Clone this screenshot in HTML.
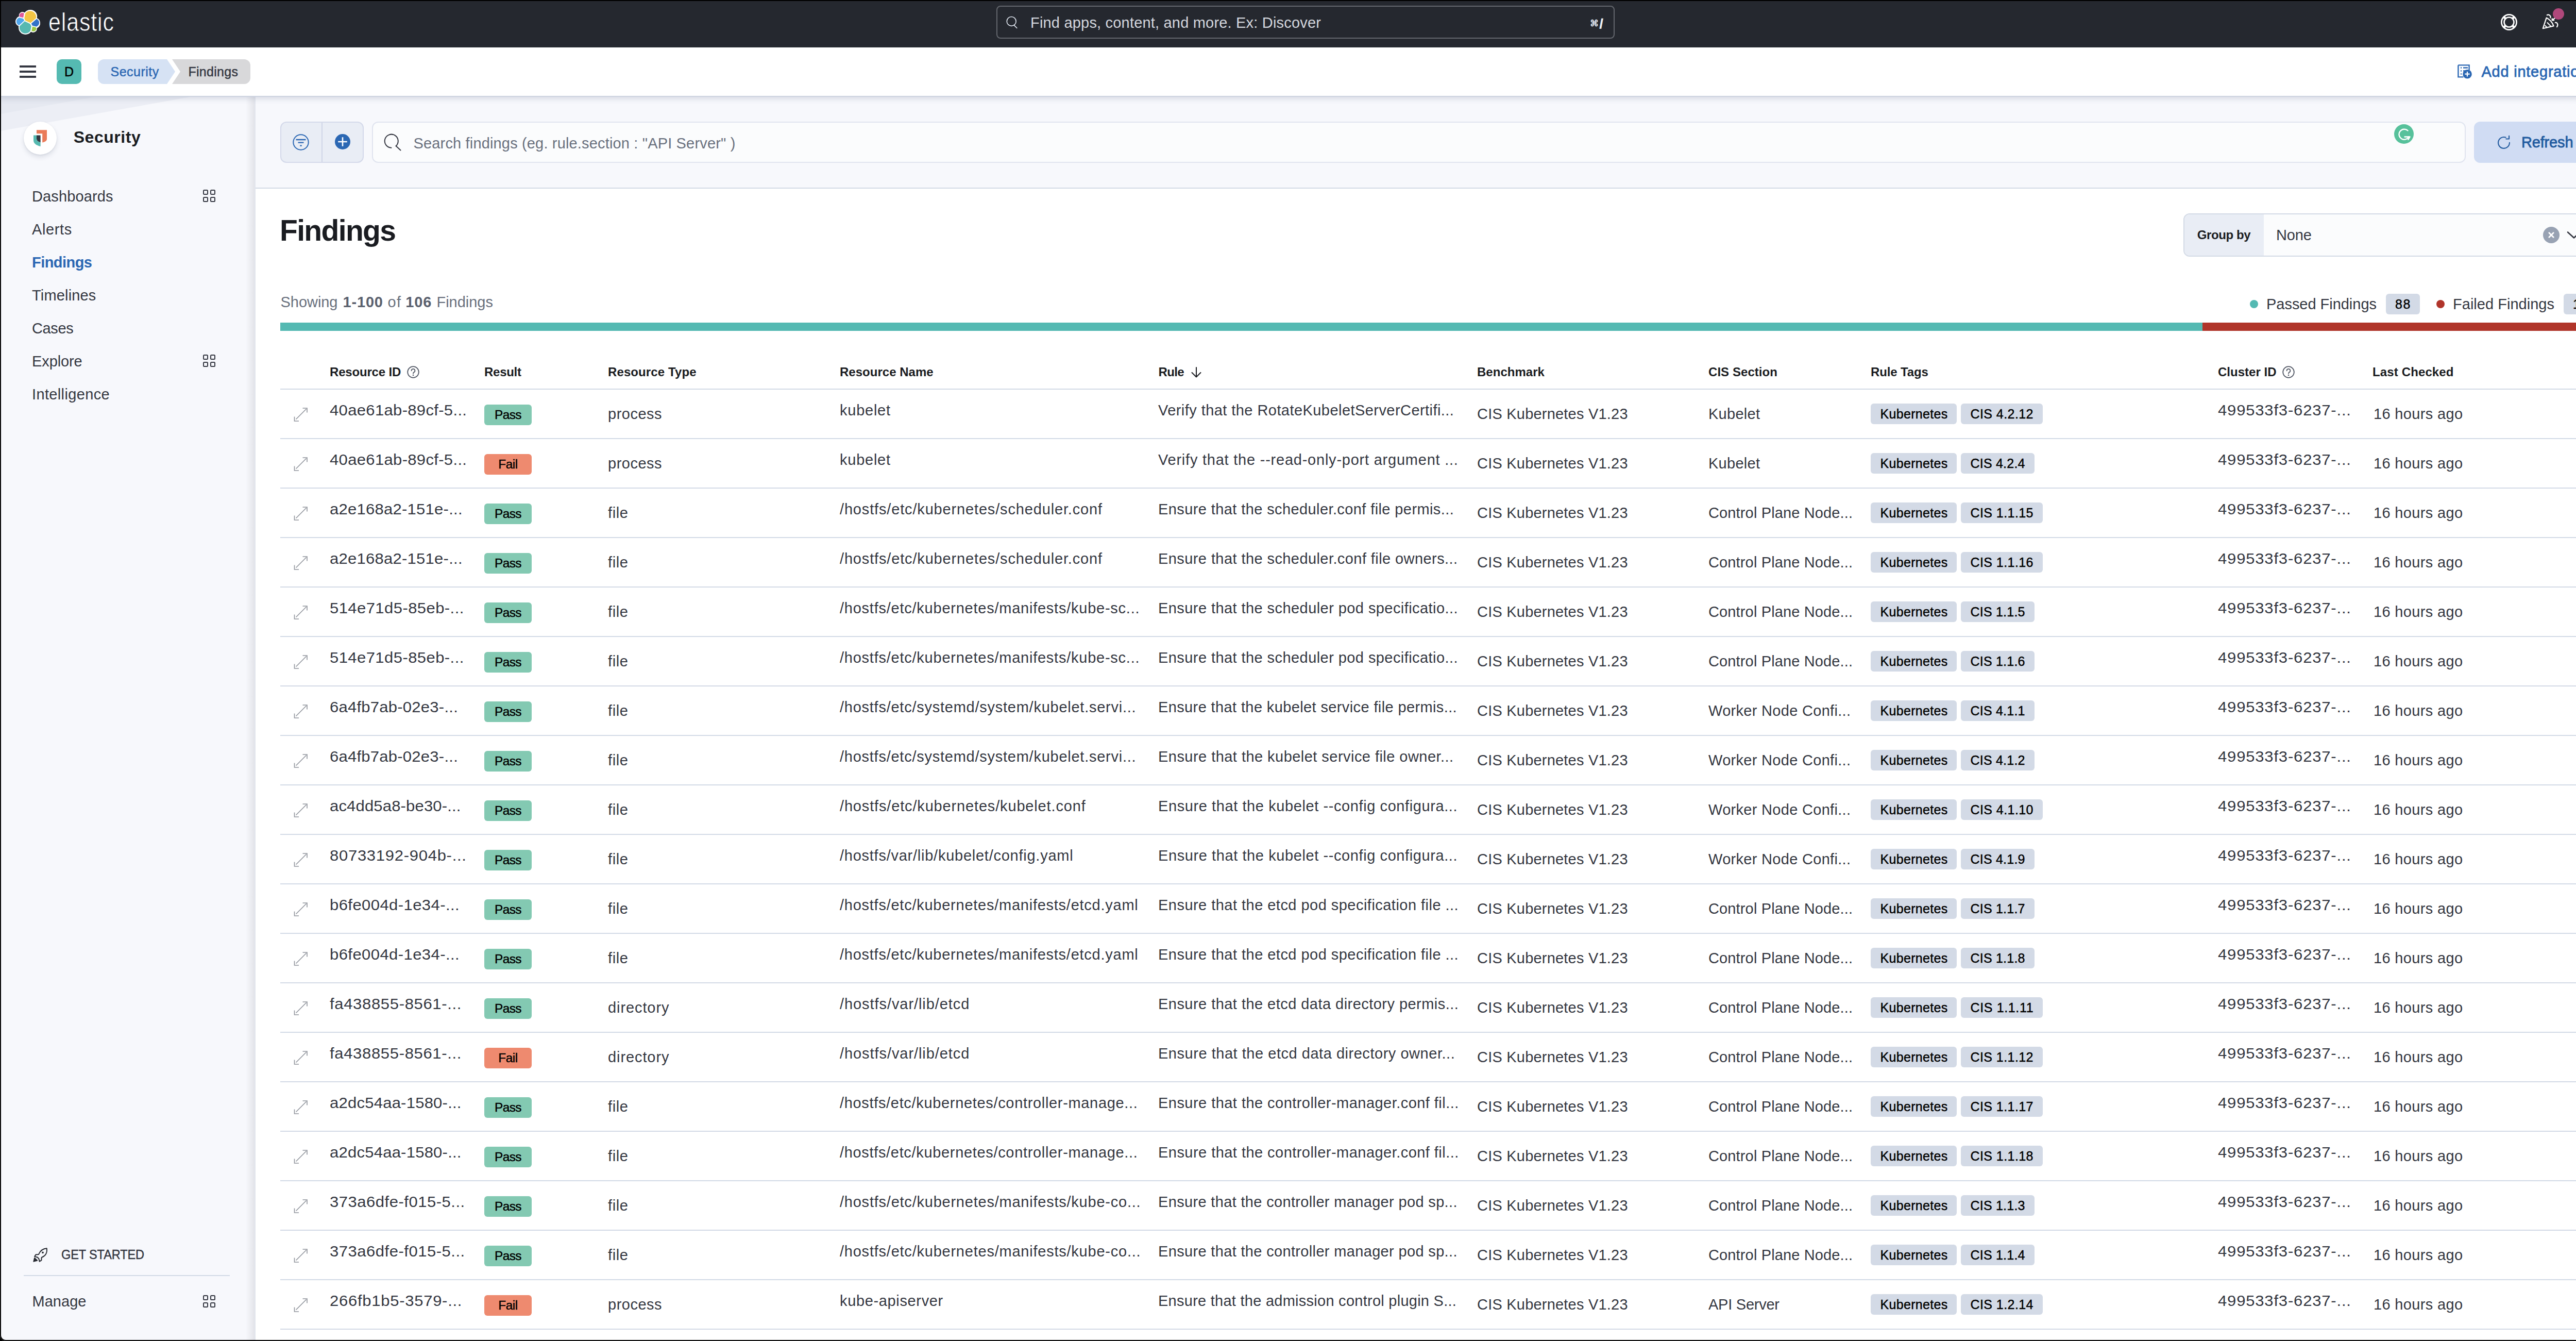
<!DOCTYPE html>
<html lang="en"><head><meta charset="utf-8"><title>Findings - Security - Elastic</title>
<style>
html,body{margin:0;padding:0}
body{width:5088px;height:2602px;overflow:hidden;background:#fff;position:relative;font-family:"Liberation Sans",sans-serif;color:#343741}
body>*{position:absolute}
.t{white-space:pre}
.med{-webkit-text-stroke:.45px currentColor}
.semi{-webkit-text-stroke:.8px currentColor}
.elastic{-webkit-text-stroke:.7px #25282f}
svg{overflow:visible}
#h1{left:0;top:0;width:5088px;height:92px;background:#25282f}
#gsearch{left:1934px;top:11px;width:1200px;height:64px;box-sizing:border-box;border:2px solid #63666d;border-radius:8px;background:#25282f}
#dot{left:4955px;top:16px;width:22px;height:22px;border-radius:50%;background:#b0487b}
#avatar{left:5006px;top:19px;width:48px;height:48px;border-radius:50%;background:#b9ab8d}
#h2{left:0;top:92px;width:5088px;height:94px;background:#fff;border-bottom:2px solid #cdd3e0;box-shadow:0 4px 10px rgba(80,90,120,.18);z-index:5}
.ham,#space,#bc1,#bc2{z-index:6}
.t,.ic{z-index:7}
.ham{left:38px;width:32px;height:4px;background:#343741}
#space{left:110px;top:115px;width:48px;height:48px;border-radius:10px;background:#55bab2}
#bc1{left:190px;top:115px;width:150px;height:48px;background:#d6e2f4;border-radius:12px 0 0 12px;clip-path:polygon(0 0,134px 0,100% 50%,134px 100%,0 100%)}
#bc2{left:334px;top:115px;width:152px;height:48px;background:#d8d8da;border-radius:0 12px 12px 0;clip-path:polygon(0 0,100% 0,100% 100%,0 100%,16px 50%)}
#side{left:0;top:186px;width:494px;height:2416px;background:#f7f8fc}
#sideshadow{left:477px;top:188px;width:17px;height:2414px;background:linear-gradient(90deg,rgba(105,105,120,0),rgba(105,105,120,.14))}
#sideborder{left:494px;top:188px;width:2px;height:2414px;background:#e2e5ed}
#seccircle{left:46px;top:236px;width:64px;height:64px;border-radius:50%;background:#fff;box-shadow:0 5px 10px rgba(60,70,100,.14),0 1px 3px rgba(60,70,100,.1)}
#sidehr{left:46px;top:2474px;width:400px;height:2px;background:#d3dae6}
#toolbar{left:496px;top:186px;width:4592px;height:178px;background:#f7f8fc;border-bottom:2px solid #d3dae6}
#fgroup{left:544px;top:236px;width:162px;height:80px;box-sizing:border-box;border:2px solid #d4d9ea;border-radius:12px;background:#e9edf5}
#fgroup i{position:absolute;left:78px;top:0;width:2px;height:76px;background:#d0d5e7}
#qinput{left:722px;top:236px;width:4064px;height:80px;box-sizing:border-box;border:2px solid #e0e4ef;border-radius:12px;background:#fbfcfd}
#refresh{left:4802px;top:236px;width:236px;height:80px;border-radius:12px;background:#d0dcf3}
#groupby{left:4238px;top:414px;width:800px;height:84px;box-sizing:border-box;border:2px solid #d3dae6;border-radius:12px;background:#fbfcfd;overflow:hidden}
#groupby i{position:absolute;left:0;top:0;width:154px;height:80px;background:#e9edf5}
.ldot{top:582px;width:16px;height:16px;border-radius:50%}
.cnt{top:570px;height:40px;border-radius:6px;background:#d3dae6}
#bar{left:544px;top:626px;width:4494px;height:16px;background:#b0352a}
#bar i{position:absolute;left:0;top:0;width:3731px;height:16px;background:#54b9b2}
.hl{left:544px;width:4494px;height:2px;background:#d3dae6}
.res{left:940px;width:92px;height:40px;border-radius:6px}
.pass{background:#83c9b2}.fail{background:#ee8a6f}
.tag{height:40px;border-radius:6px;background:#d3dae6}
#frame{left:0;top:0;width:5088px;height:2602px;box-sizing:border-box;border:2px solid #000;border-bottom-left-radius:11px;box-shadow:0 0 0 30px #000;z-index:50;pointer-events:none}
</style></head>
<body>
<div id="h1"></div>
<svg id="logo" viewBox="0 0 32 32" style="left:30px;top:19px;width:48px;height:48px">
<path fill="#fff" d="M32 16.77a6.334 6.334 0 0 0-1.14-3.63 6.269 6.269 0 0 0-3.03-2.29 9.021 9.021 0 0 0-1.6-7.63A8.932 8.932 0 0 0 19.19 0a8.883 8.883 0 0 0-7.22 3.7 4.757 4.757 0 0 0-5.37-.26 4.8 4.8 0 0 0-2.03 5.01A6.39 6.39 0 0 0 1.16 11.55 6.42 6.42 0 0 0 0 15.23a6.36 6.36 0 0 0 1.15 3.65 6.29 6.29 0 0 0 3.04 2.29 9.04 9.04 0 0 0-.2 1.83 8.95 8.95 0 0 0 6.19 8.56 8.87 8.87 0 0 0 9.99-3.28 4.74 4.74 0 0 0 2.91 1.02 4.76 4.76 0 0 0 3.37-1.4 4.8 4.8 0 0 0 1.4-3.39c0-.3-.03-.6-.09-.89a6.4 6.4 0 0 0 3.07-2.32A6.43 6.43 0 0 0 32 16.77"/>
<path fill="#f4c545" d="M12.58 13.787l7.002 3.211 7.066-6.213a7.849 7.849 0 0 0 .152-1.557c0-4.287-3.472-7.775-7.74-7.775a7.723 7.723 0 0 0-6.38 3.37l-1.176 6.124 1.076 2.84z"/>
<path fill="#56b9b1" d="M5.348 21.205a7.9 7.9 0 0 0-.153 1.583c0 4.299 3.482 7.796 7.762 7.796a7.738 7.738 0 0 0 6.398-3.396l1.166-6.104-1.557-2.989-7.03-3.217-6.586 6.327z"/>
<path fill="#e0589b" d="M5.305 9.034l4.8 1.138 1.05-5.48a3.794 3.794 0 0 0-2.31-.786c-2.085 0-3.782 1.704-3.782 3.799 0 .463.082.91.242 1.329"/>
<path fill="#4fa6ec" d="M4.888 10.182C2.744 10.893 1.25 12.958 1.25 15.227c0 2.21 1.36 4.182 3.404 4.962l6.733-6.113-1.236-2.653-5.263-1.241z"/>
<path fill="#9bc73f" d="M20.887 27.188a3.754 3.754 0 0 0 2.299.789c2.085 0 3.782-1.704 3.782-3.799 0-.462-.082-.91-.241-1.329l-4.796-1.127-1.044 5.466z"/>
<path fill="#3372c7" d="M21.862 20.543l5.28 1.24c2.145-.712 3.64-2.778 3.64-5.048 0-2.206-1.364-4.176-3.411-4.954l-6.906 6.077 1.397 2.685z"/>
</svg>
<span class="t elastic" style="left:94.0px;top:6.2px;font-size:50px;line-height:75px;color:#fff;letter-spacing:0.99px;transform:scaleX(0.86);transform-origin:0 50%;">elastic</span>
<div id="gsearch"></div>
<svg class="ic" viewBox="0 0 32 32" style="left:1951px;top:30px;width:26px;height:26px" fill="none" stroke="#dfe5ef" stroke-width="2"><circle cx="15" cy="14" r="11"/><path d="M21.5 23.5L28 30" stroke-linecap="round"/></svg>
<span class="t" style="left:2000.0px;top:21.5px;font-size:29px;line-height:44px;color:#d4d7de;letter-spacing:0.19px;">Find apps, content, and more. Ex: Discover</span>
<span class="t kbd" style="left:3085.5px;top:33.3px;font-size:17px;line-height:26px;font-weight:700;color:#dfe5ef;font-family:"DejaVu Sans","Liberation Sans",sans-serif;">⌘</span>
<span class="t kbd" style="left:3104.5px;top:26.5px;font-size:26px;line-height:39px;font-weight:700;color:#eef1f6;-webkit-text-stroke:.5px #eef1f6;">/</span>
<svg class="ic" viewBox="0 0 32 32" style="left:4854px;top:27px;width:32px;height:32px" fill="none" stroke="#fff" stroke-width="2.700"><circle cx="16" cy="16" r="14.600"/><circle cx="16" cy="16" r="9.500"/><path d="M6.200 6.200l2.500 2.500M25.800 6.200l-2.500 2.500M6.200 25.800l2.500-2.500M25.800 25.800l-2.500-2.500" stroke-width="4.600"/></svg>
<svg class="ic" viewBox="0 0 32 32" style="left:4934px;top:27px;width:32px;height:32px" fill="none" stroke="#fff" stroke-width="2.200" stroke-linecap="round" stroke-linejoin="round"><path d="M8.600 7.600L1.800 28.200 22.600 23.400Q18.500 12.500 8.600 7.600z"/><path d="M10.400 17l6.500 6.600M6.200 22.700l3.200 3.300" stroke-width="2"/><path d="M9.800 2.200c3.400-1.600 7.600.800 6.600 5.200M25.800 16.800c3.600-.600 6.400 3.400 3.200 8.400M24.400 8.700l-4.700 3.600M19.700 9v3.300h3.500"/></svg>
<div id="dot"></div>
<div id="avatar"></div>
<span class="t" style="left:5026.6px;top:23.4px;font-size:24.4px;line-height:37px;color:#000;-webkit-text-stroke:.7px #000;">t</span>
<div id="h2"></div>
<div class="ham" style="top:127px"></div><div class="ham" style="top:137px"></div><div class="ham" style="top:147px"></div>
<div id="space"></div>
<span class="t" style="left:125.0px;top:120.3px;font-size:25px;line-height:38px;color:#000;-webkit-text-stroke:.5px #000;">D</span>
<div id="bc1"></div><div id="bc2"></div>
<span class="t med" style="left:214.6px;top:119.8px;font-size:25px;line-height:38px;color:#2b67b3;letter-spacing:0.47px;">Security</span>
<span class="t med" style="left:365.5px;top:119.8px;font-size:25px;line-height:38px;letter-spacing:0.27px;">Findings</span>
<svg class="ic" viewBox="0 0 32 32" style="left:4768px;top:123px;width:32px;height:32px" fill="none" stroke="#2b67b3" stroke-width="2.4"><path d="M3.400 3.400h21.200v10M3.400 3.400v23h10"/><path d="M8 8.500h2M8 14.500h2M8 20.500h2M13 8.500h9M13 14.500h6M13 20.500h3" stroke-width="2.600"/><circle cx="21" cy="20.700" r="8.800" fill="#2b67b3" stroke="none"/><path d="M21 16v9.400M16.300 20.700h9.400" stroke="#fff" stroke-width="2.200"/></svg>
<span class="t semi" style="left:4816.5px;top:116.5px;font-size:29px;line-height:44px;color:#2b67b3;letter-spacing:0.76px;">Add integrations</span>
<div id="side"></div>
<svg id="sidedeco" viewBox="0 0 492 120" style="left:2px;top:188px;width:492px;height:120px"><path d="M0 0h367L0 66z" fill="#eceef5"/><path d="M0 0h182L0 33z" fill="#e6e9f1"/></svg>
<div id="sideshadow"></div><div id="sideborder"></div>
<div id="seccircle"></div>
<svg class="ic" viewBox="0 0 32 32" style="left:62px;top:251.600px;width:32px;height:32px"><path fill="#ea7b59" d="M9 .3h20v17.500c0 3.400-3.500 5.800-8.800 6.800V7.300H9z"/><path fill="#343741" d="M9 10.600h7.600v13.600C12 23.200 9 20.700 9 17.200z"/><path fill="#56b9b0" d="M3 10.600h6v6.600c0 3.500 3 6 7.600 7v7.900C8 30 3 26 3 20.300z"/></svg>
<span class="t" style="left:142.7px;top:241.9px;font-size:32px;line-height:48px;font-weight:700;color:#1a1c21;letter-spacing:0.53px;">Security</span>
<span class="t" style="left:62.0px;top:358.5px;font-size:29px;line-height:44px;letter-spacing:0.12px;">Dashboards</span>
<svg class="ic" viewBox="0 0 24 24" style="left:394px;top:368px;width:24px;height:24px" fill="none" stroke="#343741" stroke-width="2"><rect x="1" y="1" width="8" height="8" rx="1.500"/><rect x="15" y="1" width="8" height="8" rx="1.500"/><rect x="1" y="15" width="8" height="8" rx="1.500"/><rect x="15" y="15" width="8" height="8" rx="1.500"/></svg>
<span class="t" style="left:62.0px;top:422.5px;font-size:29px;line-height:44px;letter-spacing:0.63px;">Alerts</span>
<span class="t" style="left:62.0px;top:486.5px;font-size:29px;line-height:44px;font-weight:700;color:#2b67b3;letter-spacing:-0.55px;">Findings</span>
<span class="t" style="left:62.0px;top:550.5px;font-size:29px;line-height:44px;letter-spacing:0.17px;">Timelines</span>
<span class="t" style="left:62.0px;top:614.5px;font-size:29px;line-height:44px;letter-spacing:-0.38px;">Cases</span>
<span class="t" style="left:62.0px;top:678.5px;font-size:29px;line-height:44px;letter-spacing:-0.10px;">Explore</span>
<svg class="ic" viewBox="0 0 24 24" style="left:394px;top:688px;width:24px;height:24px" fill="none" stroke="#343741" stroke-width="2"><rect x="1" y="1" width="8" height="8" rx="1.500"/><rect x="15" y="1" width="8" height="8" rx="1.500"/><rect x="1" y="15" width="8" height="8" rx="1.500"/><rect x="15" y="15" width="8" height="8" rx="1.500"/></svg>
<span class="t" style="left:62.0px;top:742.5px;font-size:29px;line-height:44px;letter-spacing:0.36px;">Intelligence</span>
<svg class="ic" viewBox="0 0 32 32" style="left:63.500px;top:2419.500px;width:29px;height:29px" fill="none" stroke="#25282f" stroke-width="2.200" stroke-linejoin="round"><path d="M29.500 2.500c-9 .5-14 5-17.500 13l-6 .5-2.500 4 6 1.500 3 3 1.500 6 4-2.500.5-6c8-3.500 12.500-8.500 11-19.500z"/><circle cx="21" cy="11.500" r="2" fill="#25282f" stroke="none"/><path d="M1.500 30.500l2-7.500 5.500 5.500z" fill="#25282f"/></svg>
<span class="t med" style="left:119.0px;top:2414.6px;font-size:25px;line-height:38px;letter-spacing:-0.10px;transform:scaleX(0.94);transform-origin:0 50%;">GET STARTED</span>
<div id="sidehr"></div>
<span class="t" style="left:62.5px;top:2503.0px;font-size:29px;line-height:44px;letter-spacing:0.04px;">Manage</span>
<svg class="ic" viewBox="0 0 24 24" style="left:394px;top:2513px;width:24px;height:24px" fill="none" stroke="#343741" stroke-width="2"><rect x="1" y="1" width="8" height="8" rx="1.500"/><rect x="15" y="1" width="8" height="8" rx="1.500"/><rect x="1" y="15" width="8" height="8" rx="1.500"/><rect x="15" y="15" width="8" height="8" rx="1.500"/></svg>
<div id="toolbar"></div>
<div id="fgroup"><i></i></div>
<svg class="ic" viewBox="0 0 32 32" style="left:568px;top:260px;width:32px;height:32px" fill="none" stroke="#2b67b3" stroke-width="2"><circle cx="16" cy="16" r="14.700"/><path d="M6.500 11h19M10.500 16.600h11M14.300 22.600h3.500" stroke-width="2.400"/></svg>
<svg class="ic" viewBox="0 0 32 32" style="left:649px;top:259px;width:32px;height:32px"><circle cx="16" cy="16" r="15" fill="#2b67b3"/><path d="M16 7.200v17.600M7.200 16h17.600" stroke="#fff" stroke-width="2.600"/></svg>
<div id="qinput"></div>
<svg class="ic" viewBox="0 0 36 36" style="left:744px;top:258px;width:36px;height:36px" fill="none" stroke="#343741" stroke-width="2" stroke-linecap="round"><path d="M15.500 28.700A13 13 0 1 1 24.600 25.200"/><path d="M24.600 25.200L33.500 33.500"/></svg>
<span class="t" style="left:802.5px;top:255.5px;font-size:29px;line-height:44px;color:#69707d;letter-spacing:0.16px;">Search findings (eg. rule.section : &quot;API Server&quot; )</span>
<svg class="ic" viewBox="0 0 38 38" style="left:4647px;top:241px;width:38px;height:38px"><circle cx="19" cy="19" r="19" fill="#57c19b"/><path d="M26.500 12.500a10 10 0 1 0 1.800 12" fill="none" stroke="#fff" stroke-width="2.400" stroke-linecap="round"/><path d="M20.500 24.500h10l-3.200 5.200" fill="none" stroke="#fff" stroke-width="2.400" stroke-linejoin="round" stroke-linecap="round"/></svg>
<div id="refresh"></div>
<svg class="ic" viewBox="0 0 32 32" style="left:4846px;top:262px;width:28px;height:28px" fill="none" stroke="#225b9f" stroke-width="2.400" stroke-linecap="round" stroke-linejoin="round"><path d="M28.500 17A12.500 12.500 0 1 1 20 5.200"/><path d="M27.500 2v6.500H21"/></svg>
<span class="t semi" style="left:4894.0px;top:254.0px;font-size:29px;line-height:44px;color:#225b9f;letter-spacing:-0.17px;">Refresh</span>
<span class="t" style="left:543.0px;top:403.7px;font-size:57px;line-height:86px;font-weight:700;color:#1a1c21;letter-spacing:-1.64px;">Findings</span>
<div id="groupby"><i></i></div>
<span class="t" style="left:4264.7px;top:437.7px;font-size:24px;line-height:36px;font-weight:700;color:#1a1c21;letter-spacing:-0.38px;">Group by</span>
<span class="t" style="left:4418.0px;top:433.5px;font-size:29px;line-height:44px;letter-spacing:-0.11px;">None</span>
<svg class="ic" viewBox="0 0 32 32" style="left:4936px;top:439.600px;width:32px;height:32px"><circle cx="16" cy="16" r="16" fill="#98a2b3"/><path d="M11.800 11.800l8.400 8.400M20.200 11.800l-8.400 8.400" stroke="#fff" stroke-width="2.800" stroke-linecap="round"/></svg>
<svg class="ic" viewBox="0 0 32 32" style="left:4980px;top:440px;width:32px;height:32px" fill="none" stroke="#343741" stroke-width="2.600" stroke-linecap="round" stroke-linejoin="round"><path d="M4 10.500l12 11 12-11"/></svg>
<span class="t" style="left:544.5px;top:564.0px;font-size:29px;line-height:44px;color:#69707d;letter-spacing:-0.04px;">Showing</span>
<span class="t" style="left:665.5px;top:564.0px;font-size:29px;line-height:44px;font-weight:700;color:#5a606d;letter-spacing:0.83px;">1-100</span>
<span class="t" style="left:752.5px;top:564.0px;font-size:29px;line-height:44px;color:#69707d;letter-spacing:1.31px;">of</span>
<span class="t" style="left:787.3px;top:564.0px;font-size:29px;line-height:44px;font-weight:700;color:#5a606d;letter-spacing:0.80px;">106</span>
<span class="t" style="left:847.5px;top:564.0px;font-size:29px;line-height:44px;color:#69707d;letter-spacing:-0.02px;">Findings</span>
<div class="ldot" style="left:4367px;background:#54b9b2"></div>
<span class="t" style="left:4399.0px;top:568.0px;font-size:29px;line-height:44px;letter-spacing:-0.03px;">Passed Findings</span>
<div class="cnt" style="left:4631px;width:66px"></div>
<span class="t med" style="left:4649.0px;top:570.8px;font-size:25px;line-height:38px;color:#000;letter-spacing:1.69px;">88</span>
<div class="ldot" style="left:4729px;background:#b0352a"></div>
<span class="t" style="left:4761.0px;top:568.0px;font-size:29px;line-height:44px;letter-spacing:0.02px;">Failed Findings</span>
<div class="cnt" style="left:4976px;width:62px"></div>
<span class="t med" style="left:4994.0px;top:570.8px;font-size:25px;line-height:38px;color:#000;letter-spacing:-1.81px;">18</span>
<div id="bar"><i></i></div>
<span class="t" style="left:640.0px;top:704.2px;font-size:24px;line-height:36px;font-weight:700;color:#1a1c21;letter-spacing:-0.18px;">Resource ID</span>
<span class="t" style="left:940.0px;top:704.2px;font-size:24px;line-height:36px;font-weight:700;color:#1a1c21;letter-spacing:-0.27px;">Result</span>
<span class="t" style="left:1180.0px;top:704.2px;font-size:24px;line-height:36px;font-weight:700;color:#1a1c21;letter-spacing:0.10px;">Resource Type</span>
<span class="t" style="left:1630.0px;top:704.2px;font-size:24px;line-height:36px;font-weight:700;color:#1a1c21;letter-spacing:0.02px;">Resource Name</span>
<span class="t" style="left:2248.5px;top:704.2px;font-size:24px;line-height:36px;font-weight:700;color:#1a1c21;letter-spacing:-0.67px;">Rule</span>
<span class="t" style="left:2867.0px;top:704.2px;font-size:24px;line-height:36px;font-weight:700;color:#1a1c21;letter-spacing:0.03px;">Benchmark</span>
<span class="t" style="left:3316.0px;top:704.2px;font-size:24px;line-height:36px;font-weight:700;color:#1a1c21;letter-spacing:0.06px;">CIS Section</span>
<span class="t" style="left:3631.0px;top:704.2px;font-size:24px;line-height:36px;font-weight:700;color:#1a1c21;letter-spacing:-0.12px;">Rule Tags</span>
<span class="t" style="left:4305.0px;top:704.2px;font-size:24px;line-height:36px;font-weight:700;color:#1a1c21;letter-spacing:0.02px;">Cluster ID</span>
<span class="t" style="left:4605.0px;top:704.2px;font-size:24px;line-height:36px;font-weight:700;color:#1a1c21;letter-spacing:0.13px;">Last Checked</span>
<svg class="ic" viewBox="0 0 24 24" style="left:790px;top:710px;width:24px;height:24px" fill="none" stroke="#535966" stroke-width="1.800"><circle cx="12" cy="12" r="10.800"/><path d="M8.600 9.300a3.400 3.400 0 1 1 4.800 3.100c-.9.500-1.400 1-1.400 2.300" stroke-linecap="round"/><circle cx="12" cy="18" r="1.300" fill="#535966" stroke="none"/></svg>
<svg class="ic" viewBox="0 0 24 24" style="left:4430px;top:710px;width:24px;height:24px" fill="none" stroke="#535966" stroke-width="1.800"><circle cx="12" cy="12" r="10.800"/><path d="M8.600 9.300a3.400 3.400 0 1 1 4.800 3.100c-.9.500-1.400 1-1.400 2.300" stroke-linecap="round"/><circle cx="12" cy="18" r="1.300" fill="#535966" stroke="none"/></svg>
<svg class="ic" viewBox="0 0 24 24" style="left:2310px;top:710px;width:24px;height:24px" fill="none" stroke="#1a1c21" stroke-width="2" stroke-linecap="round" stroke-linejoin="round"><path d="M12 3v18M3.500 13l8.500 8.500 8.500-8.500"/></svg>
<div class="hl" style="top:754px"></div>
<svg class="ic" viewBox="0 0 32 32" style="left:568px;top:788px;width:32px;height:32px" fill="none" stroke="#90949c" stroke-width="1.600"><path d="M6.500 25.500L26.500 5.500M19.500 4h8.500v8.500M3.500 20.500v8.500H12"/></svg>
<span class="t" style="left:640.0px;top:774.0px;font-size:29px;line-height:44px;letter-spacing:0.30px;transform:scaleX(1.07);transform-origin:0 50%;">40ae61ab-89cf-5...</span>
<div class="res pass" style="top:785px"></div>
<span class="t med" style="left:986.0px;top:785.5px;font-size:24.4px;line-height:37px;color:#000;letter-spacing:-0.54px;transform:translateX(-50%);">Pass</span>
<span class="t" style="left:1180.0px;top:781.0px;font-size:29px;line-height:44px;letter-spacing:0.51px;">process</span>
<span class="t" style="left:1630.0px;top:774.0px;font-size:29px;line-height:44px;letter-spacing:0.75px;">kubelet</span>
<span class="t" style="left:2248.0px;top:774.0px;font-size:29px;line-height:44px;letter-spacing:0.44px;">Verify that the RotateKubeletServerCertifi...</span>
<span class="t" style="left:2867.0px;top:781.0px;font-size:29px;line-height:44px;letter-spacing:0.21px;">CIS Kubernetes V1.23</span>
<span class="t" style="left:3316.0px;top:781.0px;font-size:29px;line-height:44px;letter-spacing:0.27px;">Kubelet</span>
<div class="tag" style="left:3631px;top:783px;width:167px"></div>
<span class="t med" style="left:3649.5px;top:783.8px;font-size:25px;line-height:38px;color:#000;letter-spacing:0.31px;">Kubernetes</span>
<div class="tag" style="left:3806px;top:783px;width:159px"></div>
<span class="t med" style="left:3824.5px;top:783.8px;font-size:25px;line-height:38px;color:#000;letter-spacing:0.43px;">CIS 4.2.12</span>
<span class="t" style="left:4305.0px;top:774.0px;font-size:29px;line-height:44px;letter-spacing:0.76px;transform:scaleX(1.07);transform-origin:0 50%;">499533f3-6237-...</span>
<span class="t" style="left:4607.0px;top:781.0px;font-size:29px;line-height:44px;letter-spacing:0.34px;">16 hours ago</span>
<div class="hl" style="top:850px"></div>
<svg class="ic" viewBox="0 0 32 32" style="left:568px;top:884px;width:32px;height:32px" fill="none" stroke="#90949c" stroke-width="1.600"><path d="M6.500 25.500L26.500 5.500M19.500 4h8.500v8.500M3.500 20.500v8.500H12"/></svg>
<span class="t" style="left:640.0px;top:870.0px;font-size:29px;line-height:44px;letter-spacing:0.30px;transform:scaleX(1.07);transform-origin:0 50%;">40ae61ab-89cf-5...</span>
<div class="res fail" style="top:881px"></div>
<span class="t med" style="left:986.0px;top:881.5px;font-size:24.4px;line-height:37px;color:#000;letter-spacing:-0.44px;transform:translateX(-50%);">Fail</span>
<span class="t" style="left:1180.0px;top:877.0px;font-size:29px;line-height:44px;letter-spacing:0.51px;">process</span>
<span class="t" style="left:1630.0px;top:870.0px;font-size:29px;line-height:44px;letter-spacing:0.75px;">kubelet</span>
<span class="t" style="left:2248.0px;top:870.0px;font-size:29px;line-height:44px;letter-spacing:0.77px;">Verify that the --read-only-port argument ...</span>
<span class="t" style="left:2867.0px;top:877.0px;font-size:29px;line-height:44px;letter-spacing:0.21px;">CIS Kubernetes V1.23</span>
<span class="t" style="left:3316.0px;top:877.0px;font-size:29px;line-height:44px;letter-spacing:0.27px;">Kubelet</span>
<div class="tag" style="left:3631px;top:879px;width:167px"></div>
<span class="t med" style="left:3649.5px;top:879.8px;font-size:25px;line-height:38px;color:#000;letter-spacing:0.31px;">Kubernetes</span>
<div class="tag" style="left:3806px;top:879px;width:143px"></div>
<span class="t med" style="left:3824.5px;top:879.8px;font-size:25px;line-height:38px;color:#000;letter-spacing:0.22px;">CIS 4.2.4</span>
<span class="t" style="left:4305.0px;top:870.0px;font-size:29px;line-height:44px;letter-spacing:0.76px;transform:scaleX(1.07);transform-origin:0 50%;">499533f3-6237-...</span>
<span class="t" style="left:4607.0px;top:877.0px;font-size:29px;line-height:44px;letter-spacing:0.34px;">16 hours ago</span>
<div class="hl" style="top:946px"></div>
<svg class="ic" viewBox="0 0 32 32" style="left:568px;top:980px;width:32px;height:32px" fill="none" stroke="#90949c" stroke-width="1.600"><path d="M6.500 25.500L26.500 5.500M19.500 4h8.500v8.500M3.500 20.500v8.500H12"/></svg>
<span class="t" style="left:640.0px;top:966.0px;font-size:29px;line-height:44px;letter-spacing:0.23px;transform:scaleX(1.07);transform-origin:0 50%;">a2e168a2-151e-...</span>
<div class="res pass" style="top:977px"></div>
<span class="t med" style="left:986.0px;top:977.5px;font-size:24.4px;line-height:37px;color:#000;letter-spacing:-0.54px;transform:translateX(-50%);">Pass</span>
<span class="t" style="left:1180.0px;top:973.0px;font-size:29px;line-height:44px;letter-spacing:0.64px;">file</span>
<span class="t" style="left:1630.0px;top:966.0px;font-size:29px;line-height:44px;letter-spacing:0.84px;">/hostfs/etc/kubernetes/scheduler.conf</span>
<span class="t" style="left:2248.0px;top:966.0px;font-size:29px;line-height:44px;letter-spacing:0.40px;">Ensure that the scheduler.conf file permis...</span>
<span class="t" style="left:2867.0px;top:973.0px;font-size:29px;line-height:44px;letter-spacing:0.21px;">CIS Kubernetes V1.23</span>
<span class="t" style="left:3316.0px;top:973.0px;font-size:29px;line-height:44px;letter-spacing:0.14px;">Control Plane Node...</span>
<div class="tag" style="left:3631px;top:975px;width:167px"></div>
<span class="t med" style="left:3649.5px;top:975.8px;font-size:25px;line-height:38px;color:#000;letter-spacing:0.31px;">Kubernetes</span>
<div class="tag" style="left:3806px;top:975px;width:159px"></div>
<span class="t med" style="left:3824.5px;top:975.8px;font-size:25px;line-height:38px;color:#000;letter-spacing:0.43px;">CIS 1.1.15</span>
<span class="t" style="left:4305.0px;top:966.0px;font-size:29px;line-height:44px;letter-spacing:0.76px;transform:scaleX(1.07);transform-origin:0 50%;">499533f3-6237-...</span>
<span class="t" style="left:4607.0px;top:973.0px;font-size:29px;line-height:44px;letter-spacing:0.34px;">16 hours ago</span>
<div class="hl" style="top:1042px"></div>
<svg class="ic" viewBox="0 0 32 32" style="left:568px;top:1076px;width:32px;height:32px" fill="none" stroke="#90949c" stroke-width="1.600"><path d="M6.500 25.500L26.500 5.500M19.500 4h8.500v8.500M3.500 20.500v8.500H12"/></svg>
<span class="t" style="left:640.0px;top:1062.0px;font-size:29px;line-height:44px;letter-spacing:0.23px;transform:scaleX(1.07);transform-origin:0 50%;">a2e168a2-151e-...</span>
<div class="res pass" style="top:1073px"></div>
<span class="t med" style="left:986.0px;top:1073.5px;font-size:24.4px;line-height:37px;color:#000;letter-spacing:-0.54px;transform:translateX(-50%);">Pass</span>
<span class="t" style="left:1180.0px;top:1069.0px;font-size:29px;line-height:44px;letter-spacing:0.64px;">file</span>
<span class="t" style="left:1630.0px;top:1062.0px;font-size:29px;line-height:44px;letter-spacing:0.84px;">/hostfs/etc/kubernetes/scheduler.conf</span>
<span class="t" style="left:2248.0px;top:1062.0px;font-size:29px;line-height:44px;letter-spacing:0.42px;">Ensure that the scheduler.conf file owners...</span>
<span class="t" style="left:2867.0px;top:1069.0px;font-size:29px;line-height:44px;letter-spacing:0.21px;">CIS Kubernetes V1.23</span>
<span class="t" style="left:3316.0px;top:1069.0px;font-size:29px;line-height:44px;letter-spacing:0.14px;">Control Plane Node...</span>
<div class="tag" style="left:3631px;top:1071px;width:167px"></div>
<span class="t med" style="left:3649.5px;top:1071.8px;font-size:25px;line-height:38px;color:#000;letter-spacing:0.31px;">Kubernetes</span>
<div class="tag" style="left:3806px;top:1071px;width:159px"></div>
<span class="t med" style="left:3824.5px;top:1071.8px;font-size:25px;line-height:38px;color:#000;letter-spacing:0.43px;">CIS 1.1.16</span>
<span class="t" style="left:4305.0px;top:1062.0px;font-size:29px;line-height:44px;letter-spacing:0.76px;transform:scaleX(1.07);transform-origin:0 50%;">499533f3-6237-...</span>
<span class="t" style="left:4607.0px;top:1069.0px;font-size:29px;line-height:44px;letter-spacing:0.34px;">16 hours ago</span>
<div class="hl" style="top:1138px"></div>
<svg class="ic" viewBox="0 0 32 32" style="left:568px;top:1172px;width:32px;height:32px" fill="none" stroke="#90949c" stroke-width="1.600"><path d="M6.500 25.500L26.500 5.500M19.500 4h8.500v8.500M3.500 20.500v8.500H12"/></svg>
<span class="t" style="left:640.0px;top:1158.0px;font-size:29px;line-height:44px;letter-spacing:0.39px;transform:scaleX(1.07);transform-origin:0 50%;">514e71d5-85eb-...</span>
<div class="res pass" style="top:1169px"></div>
<span class="t med" style="left:986.0px;top:1169.5px;font-size:24.4px;line-height:37px;color:#000;letter-spacing:-0.54px;transform:translateX(-50%);">Pass</span>
<span class="t" style="left:1180.0px;top:1165.0px;font-size:29px;line-height:44px;letter-spacing:0.64px;">file</span>
<span class="t" style="left:1630.0px;top:1158.0px;font-size:29px;line-height:44px;letter-spacing:0.76px;">/hostfs/etc/kubernetes/manifests/kube-sc...</span>
<span class="t" style="left:2248.0px;top:1158.0px;font-size:29px;line-height:44px;letter-spacing:0.43px;">Ensure that the scheduler pod specificatio...</span>
<span class="t" style="left:2867.0px;top:1165.0px;font-size:29px;line-height:44px;letter-spacing:0.21px;">CIS Kubernetes V1.23</span>
<span class="t" style="left:3316.0px;top:1165.0px;font-size:29px;line-height:44px;letter-spacing:0.14px;">Control Plane Node...</span>
<div class="tag" style="left:3631px;top:1167px;width:167px"></div>
<span class="t med" style="left:3649.5px;top:1167.8px;font-size:25px;line-height:38px;color:#000;letter-spacing:0.31px;">Kubernetes</span>
<div class="tag" style="left:3806px;top:1167px;width:143px"></div>
<span class="t med" style="left:3824.5px;top:1167.8px;font-size:25px;line-height:38px;color:#000;letter-spacing:0.22px;">CIS 1.1.5</span>
<span class="t" style="left:4305.0px;top:1158.0px;font-size:29px;line-height:44px;letter-spacing:0.76px;transform:scaleX(1.07);transform-origin:0 50%;">499533f3-6237-...</span>
<span class="t" style="left:4607.0px;top:1165.0px;font-size:29px;line-height:44px;letter-spacing:0.34px;">16 hours ago</span>
<div class="hl" style="top:1234px"></div>
<svg class="ic" viewBox="0 0 32 32" style="left:568px;top:1268px;width:32px;height:32px" fill="none" stroke="#90949c" stroke-width="1.600"><path d="M6.500 25.500L26.500 5.500M19.500 4h8.500v8.500M3.500 20.500v8.500H12"/></svg>
<span class="t" style="left:640.0px;top:1254.0px;font-size:29px;line-height:44px;letter-spacing:0.39px;transform:scaleX(1.07);transform-origin:0 50%;">514e71d5-85eb-...</span>
<div class="res pass" style="top:1265px"></div>
<span class="t med" style="left:986.0px;top:1265.5px;font-size:24.4px;line-height:37px;color:#000;letter-spacing:-0.54px;transform:translateX(-50%);">Pass</span>
<span class="t" style="left:1180.0px;top:1261.0px;font-size:29px;line-height:44px;letter-spacing:0.64px;">file</span>
<span class="t" style="left:1630.0px;top:1254.0px;font-size:29px;line-height:44px;letter-spacing:0.76px;">/hostfs/etc/kubernetes/manifests/kube-sc...</span>
<span class="t" style="left:2248.0px;top:1254.0px;font-size:29px;line-height:44px;letter-spacing:0.43px;">Ensure that the scheduler pod specificatio...</span>
<span class="t" style="left:2867.0px;top:1261.0px;font-size:29px;line-height:44px;letter-spacing:0.21px;">CIS Kubernetes V1.23</span>
<span class="t" style="left:3316.0px;top:1261.0px;font-size:29px;line-height:44px;letter-spacing:0.14px;">Control Plane Node...</span>
<div class="tag" style="left:3631px;top:1263px;width:167px"></div>
<span class="t med" style="left:3649.5px;top:1263.8px;font-size:25px;line-height:38px;color:#000;letter-spacing:0.31px;">Kubernetes</span>
<div class="tag" style="left:3806px;top:1263px;width:143px"></div>
<span class="t med" style="left:3824.5px;top:1263.8px;font-size:25px;line-height:38px;color:#000;letter-spacing:0.22px;">CIS 1.1.6</span>
<span class="t" style="left:4305.0px;top:1254.0px;font-size:29px;line-height:44px;letter-spacing:0.76px;transform:scaleX(1.07);transform-origin:0 50%;">499533f3-6237-...</span>
<span class="t" style="left:4607.0px;top:1261.0px;font-size:29px;line-height:44px;letter-spacing:0.34px;">16 hours ago</span>
<div class="hl" style="top:1330px"></div>
<svg class="ic" viewBox="0 0 32 32" style="left:568px;top:1364px;width:32px;height:32px" fill="none" stroke="#90949c" stroke-width="1.600"><path d="M6.500 25.500L26.500 5.500M19.500 4h8.500v8.500M3.500 20.500v8.500H12"/></svg>
<span class="t" style="left:640.0px;top:1350.0px;font-size:29px;line-height:44px;letter-spacing:0.22px;transform:scaleX(1.07);transform-origin:0 50%;">6a4fb7ab-02e3-...</span>
<div class="res pass" style="top:1361px"></div>
<span class="t med" style="left:986.0px;top:1361.5px;font-size:24.4px;line-height:37px;color:#000;letter-spacing:-0.54px;transform:translateX(-50%);">Pass</span>
<span class="t" style="left:1180.0px;top:1357.0px;font-size:29px;line-height:44px;letter-spacing:0.64px;">file</span>
<span class="t" style="left:1630.0px;top:1350.0px;font-size:29px;line-height:44px;letter-spacing:0.75px;">/hostfs/etc/systemd/system/kubelet.servi...</span>
<span class="t" style="left:2248.0px;top:1350.0px;font-size:29px;line-height:44px;letter-spacing:0.38px;">Ensure that the kubelet service file permis...</span>
<span class="t" style="left:2867.0px;top:1357.0px;font-size:29px;line-height:44px;letter-spacing:0.21px;">CIS Kubernetes V1.23</span>
<span class="t" style="left:3316.0px;top:1357.0px;font-size:29px;line-height:44px;letter-spacing:0.30px;">Worker Node Confi...</span>
<div class="tag" style="left:3631px;top:1359px;width:167px"></div>
<span class="t med" style="left:3649.5px;top:1359.8px;font-size:25px;line-height:38px;color:#000;letter-spacing:0.31px;">Kubernetes</span>
<div class="tag" style="left:3806px;top:1359px;width:143px"></div>
<span class="t med" style="left:3824.5px;top:1359.8px;font-size:25px;line-height:38px;color:#000;letter-spacing:0.22px;">CIS 4.1.1</span>
<span class="t" style="left:4305.0px;top:1350.0px;font-size:29px;line-height:44px;letter-spacing:0.76px;transform:scaleX(1.07);transform-origin:0 50%;">499533f3-6237-...</span>
<span class="t" style="left:4607.0px;top:1357.0px;font-size:29px;line-height:44px;letter-spacing:0.34px;">16 hours ago</span>
<div class="hl" style="top:1426px"></div>
<svg class="ic" viewBox="0 0 32 32" style="left:568px;top:1460px;width:32px;height:32px" fill="none" stroke="#90949c" stroke-width="1.600"><path d="M6.500 25.500L26.500 5.500M19.500 4h8.500v8.500M3.500 20.500v8.500H12"/></svg>
<span class="t" style="left:640.0px;top:1446.0px;font-size:29px;line-height:44px;letter-spacing:0.22px;transform:scaleX(1.07);transform-origin:0 50%;">6a4fb7ab-02e3-...</span>
<div class="res pass" style="top:1457px"></div>
<span class="t med" style="left:986.0px;top:1457.5px;font-size:24.4px;line-height:37px;color:#000;letter-spacing:-0.54px;transform:translateX(-50%);">Pass</span>
<span class="t" style="left:1180.0px;top:1453.0px;font-size:29px;line-height:44px;letter-spacing:0.64px;">file</span>
<span class="t" style="left:1630.0px;top:1446.0px;font-size:29px;line-height:44px;letter-spacing:0.75px;">/hostfs/etc/systemd/system/kubelet.servi...</span>
<span class="t" style="left:2248.0px;top:1446.0px;font-size:29px;line-height:44px;letter-spacing:0.46px;">Ensure that the kubelet service file owner...</span>
<span class="t" style="left:2867.0px;top:1453.0px;font-size:29px;line-height:44px;letter-spacing:0.21px;">CIS Kubernetes V1.23</span>
<span class="t" style="left:3316.0px;top:1453.0px;font-size:29px;line-height:44px;letter-spacing:0.30px;">Worker Node Confi...</span>
<div class="tag" style="left:3631px;top:1455px;width:167px"></div>
<span class="t med" style="left:3649.5px;top:1455.8px;font-size:25px;line-height:38px;color:#000;letter-spacing:0.31px;">Kubernetes</span>
<div class="tag" style="left:3806px;top:1455px;width:143px"></div>
<span class="t med" style="left:3824.5px;top:1455.8px;font-size:25px;line-height:38px;color:#000;letter-spacing:0.22px;">CIS 4.1.2</span>
<span class="t" style="left:4305.0px;top:1446.0px;font-size:29px;line-height:44px;letter-spacing:0.76px;transform:scaleX(1.07);transform-origin:0 50%;">499533f3-6237-...</span>
<span class="t" style="left:4607.0px;top:1453.0px;font-size:29px;line-height:44px;letter-spacing:0.34px;">16 hours ago</span>
<div class="hl" style="top:1522px"></div>
<svg class="ic" viewBox="0 0 32 32" style="left:568px;top:1556px;width:32px;height:32px" fill="none" stroke="#90949c" stroke-width="1.600"><path d="M6.500 25.500L26.500 5.500M19.500 4h8.500v8.500M3.500 20.500v8.500H12"/></svg>
<span class="t" style="left:640.0px;top:1542.0px;font-size:29px;line-height:44px;letter-spacing:0.15px;transform:scaleX(1.07);transform-origin:0 50%;">ac4dd5a8-be30-...</span>
<div class="res pass" style="top:1553px"></div>
<span class="t med" style="left:986.0px;top:1553.5px;font-size:24.4px;line-height:37px;color:#000;letter-spacing:-0.54px;transform:translateX(-50%);">Pass</span>
<span class="t" style="left:1180.0px;top:1549.0px;font-size:29px;line-height:44px;letter-spacing:0.64px;">file</span>
<span class="t" style="left:1630.0px;top:1542.0px;font-size:29px;line-height:44px;letter-spacing:0.84px;">/hostfs/etc/kubernetes/kubelet.conf</span>
<span class="t" style="left:2248.0px;top:1542.0px;font-size:29px;line-height:44px;letter-spacing:0.59px;">Ensure that the kubelet --config configura...</span>
<span class="t" style="left:2867.0px;top:1549.0px;font-size:29px;line-height:44px;letter-spacing:0.21px;">CIS Kubernetes V1.23</span>
<span class="t" style="left:3316.0px;top:1549.0px;font-size:29px;line-height:44px;letter-spacing:0.30px;">Worker Node Confi...</span>
<div class="tag" style="left:3631px;top:1551px;width:167px"></div>
<span class="t med" style="left:3649.5px;top:1551.8px;font-size:25px;line-height:38px;color:#000;letter-spacing:0.31px;">Kubernetes</span>
<div class="tag" style="left:3806px;top:1551px;width:159px"></div>
<span class="t med" style="left:3824.5px;top:1551.8px;font-size:25px;line-height:38px;color:#000;letter-spacing:0.43px;">CIS 4.1.10</span>
<span class="t" style="left:4305.0px;top:1542.0px;font-size:29px;line-height:44px;letter-spacing:0.76px;transform:scaleX(1.07);transform-origin:0 50%;">499533f3-6237-...</span>
<span class="t" style="left:4607.0px;top:1549.0px;font-size:29px;line-height:44px;letter-spacing:0.34px;">16 hours ago</span>
<div class="hl" style="top:1618px"></div>
<svg class="ic" viewBox="0 0 32 32" style="left:568px;top:1652px;width:32px;height:32px" fill="none" stroke="#90949c" stroke-width="1.600"><path d="M6.500 25.500L26.500 5.500M19.500 4h8.500v8.500M3.500 20.500v8.500H12"/></svg>
<span class="t" style="left:640.0px;top:1638.0px;font-size:29px;line-height:44px;letter-spacing:0.66px;transform:scaleX(1.07);transform-origin:0 50%;">80733192-904b-...</span>
<div class="res pass" style="top:1649px"></div>
<span class="t med" style="left:986.0px;top:1649.5px;font-size:24.4px;line-height:37px;color:#000;letter-spacing:-0.54px;transform:translateX(-50%);">Pass</span>
<span class="t" style="left:1180.0px;top:1645.0px;font-size:29px;line-height:44px;letter-spacing:0.64px;">file</span>
<span class="t" style="left:1630.0px;top:1638.0px;font-size:29px;line-height:44px;letter-spacing:0.75px;">/hostfs/var/lib/kubelet/config.yaml</span>
<span class="t" style="left:2248.0px;top:1638.0px;font-size:29px;line-height:44px;letter-spacing:0.59px;">Ensure that the kubelet --config configura...</span>
<span class="t" style="left:2867.0px;top:1645.0px;font-size:29px;line-height:44px;letter-spacing:0.21px;">CIS Kubernetes V1.23</span>
<span class="t" style="left:3316.0px;top:1645.0px;font-size:29px;line-height:44px;letter-spacing:0.30px;">Worker Node Confi...</span>
<div class="tag" style="left:3631px;top:1647px;width:167px"></div>
<span class="t med" style="left:3649.5px;top:1647.8px;font-size:25px;line-height:38px;color:#000;letter-spacing:0.31px;">Kubernetes</span>
<div class="tag" style="left:3806px;top:1647px;width:143px"></div>
<span class="t med" style="left:3824.5px;top:1647.8px;font-size:25px;line-height:38px;color:#000;letter-spacing:0.22px;">CIS 4.1.9</span>
<span class="t" style="left:4305.0px;top:1638.0px;font-size:29px;line-height:44px;letter-spacing:0.76px;transform:scaleX(1.07);transform-origin:0 50%;">499533f3-6237-...</span>
<span class="t" style="left:4607.0px;top:1645.0px;font-size:29px;line-height:44px;letter-spacing:0.34px;">16 hours ago</span>
<div class="hl" style="top:1714px"></div>
<svg class="ic" viewBox="0 0 32 32" style="left:568px;top:1748px;width:32px;height:32px" fill="none" stroke="#90949c" stroke-width="1.600"><path d="M6.500 25.500L26.500 5.500M19.500 4h8.500v8.500M3.500 20.500v8.500H12"/></svg>
<span class="t" style="left:640.0px;top:1734.0px;font-size:29px;line-height:44px;letter-spacing:0.39px;transform:scaleX(1.07);transform-origin:0 50%;">b6fe004d-1e34-...</span>
<div class="res pass" style="top:1745px"></div>
<span class="t med" style="left:986.0px;top:1745.5px;font-size:24.4px;line-height:37px;color:#000;letter-spacing:-0.54px;transform:translateX(-50%);">Pass</span>
<span class="t" style="left:1180.0px;top:1741.0px;font-size:29px;line-height:44px;letter-spacing:0.64px;">file</span>
<span class="t" style="left:1630.0px;top:1734.0px;font-size:29px;line-height:44px;letter-spacing:0.75px;">/hostfs/etc/kubernetes/manifests/etcd.yaml</span>
<span class="t" style="left:2248.0px;top:1734.0px;font-size:29px;line-height:44px;letter-spacing:0.47px;">Ensure that the etcd pod specification file ...</span>
<span class="t" style="left:2867.0px;top:1741.0px;font-size:29px;line-height:44px;letter-spacing:0.21px;">CIS Kubernetes V1.23</span>
<span class="t" style="left:3316.0px;top:1741.0px;font-size:29px;line-height:44px;letter-spacing:0.14px;">Control Plane Node...</span>
<div class="tag" style="left:3631px;top:1743px;width:167px"></div>
<span class="t med" style="left:3649.5px;top:1743.8px;font-size:25px;line-height:38px;color:#000;letter-spacing:0.31px;">Kubernetes</span>
<div class="tag" style="left:3806px;top:1743px;width:143px"></div>
<span class="t med" style="left:3824.5px;top:1743.8px;font-size:25px;line-height:38px;color:#000;letter-spacing:0.22px;">CIS 1.1.7</span>
<span class="t" style="left:4305.0px;top:1734.0px;font-size:29px;line-height:44px;letter-spacing:0.76px;transform:scaleX(1.07);transform-origin:0 50%;">499533f3-6237-...</span>
<span class="t" style="left:4607.0px;top:1741.0px;font-size:29px;line-height:44px;letter-spacing:0.34px;">16 hours ago</span>
<div class="hl" style="top:1810px"></div>
<svg class="ic" viewBox="0 0 32 32" style="left:568px;top:1844px;width:32px;height:32px" fill="none" stroke="#90949c" stroke-width="1.600"><path d="M6.500 25.500L26.500 5.500M19.500 4h8.500v8.500M3.500 20.500v8.500H12"/></svg>
<span class="t" style="left:640.0px;top:1830.0px;font-size:29px;line-height:44px;letter-spacing:0.39px;transform:scaleX(1.07);transform-origin:0 50%;">b6fe004d-1e34-...</span>
<div class="res pass" style="top:1841px"></div>
<span class="t med" style="left:986.0px;top:1841.5px;font-size:24.4px;line-height:37px;color:#000;letter-spacing:-0.54px;transform:translateX(-50%);">Pass</span>
<span class="t" style="left:1180.0px;top:1837.0px;font-size:29px;line-height:44px;letter-spacing:0.64px;">file</span>
<span class="t" style="left:1630.0px;top:1830.0px;font-size:29px;line-height:44px;letter-spacing:0.75px;">/hostfs/etc/kubernetes/manifests/etcd.yaml</span>
<span class="t" style="left:2248.0px;top:1830.0px;font-size:29px;line-height:44px;letter-spacing:0.47px;">Ensure that the etcd pod specification file ...</span>
<span class="t" style="left:2867.0px;top:1837.0px;font-size:29px;line-height:44px;letter-spacing:0.21px;">CIS Kubernetes V1.23</span>
<span class="t" style="left:3316.0px;top:1837.0px;font-size:29px;line-height:44px;letter-spacing:0.14px;">Control Plane Node...</span>
<div class="tag" style="left:3631px;top:1839px;width:167px"></div>
<span class="t med" style="left:3649.5px;top:1839.8px;font-size:25px;line-height:38px;color:#000;letter-spacing:0.31px;">Kubernetes</span>
<div class="tag" style="left:3806px;top:1839px;width:143px"></div>
<span class="t med" style="left:3824.5px;top:1839.8px;font-size:25px;line-height:38px;color:#000;letter-spacing:0.22px;">CIS 1.1.8</span>
<span class="t" style="left:4305.0px;top:1830.0px;font-size:29px;line-height:44px;letter-spacing:0.76px;transform:scaleX(1.07);transform-origin:0 50%;">499533f3-6237-...</span>
<span class="t" style="left:4607.0px;top:1837.0px;font-size:29px;line-height:44px;letter-spacing:0.34px;">16 hours ago</span>
<div class="hl" style="top:1906px"></div>
<svg class="ic" viewBox="0 0 32 32" style="left:568px;top:1940px;width:32px;height:32px" fill="none" stroke="#90949c" stroke-width="1.600"><path d="M6.500 25.500L26.500 5.500M19.500 4h8.500v8.500M3.500 20.500v8.500H12"/></svg>
<span class="t" style="left:640.0px;top:1926.0px;font-size:29px;line-height:44px;letter-spacing:0.61px;transform:scaleX(1.07);transform-origin:0 50%;">fa438855-8561-...</span>
<div class="res pass" style="top:1937px"></div>
<span class="t med" style="left:986.0px;top:1937.5px;font-size:24.4px;line-height:37px;color:#000;letter-spacing:-0.54px;transform:translateX(-50%);">Pass</span>
<span class="t" style="left:1180.0px;top:1933.0px;font-size:29px;line-height:44px;letter-spacing:0.91px;">directory</span>
<span class="t" style="left:1630.0px;top:1926.0px;font-size:29px;line-height:44px;letter-spacing:0.93px;">/hostfs/var/lib/etcd</span>
<span class="t" style="left:2248.0px;top:1926.0px;font-size:29px;line-height:44px;letter-spacing:0.46px;">Ensure that the etcd data directory permis...</span>
<span class="t" style="left:2867.0px;top:1933.0px;font-size:29px;line-height:44px;letter-spacing:0.21px;">CIS Kubernetes V1.23</span>
<span class="t" style="left:3316.0px;top:1933.0px;font-size:29px;line-height:44px;letter-spacing:0.14px;">Control Plane Node...</span>
<div class="tag" style="left:3631px;top:1935px;width:167px"></div>
<span class="t med" style="left:3649.5px;top:1935.8px;font-size:25px;line-height:38px;color:#000;letter-spacing:0.31px;">Kubernetes</span>
<div class="tag" style="left:3806px;top:1935px;width:159px"></div>
<span class="t med" style="left:3824.5px;top:1935.8px;font-size:25px;line-height:38px;color:#000;letter-spacing:0.64px;">CIS 1.1.11</span>
<span class="t" style="left:4305.0px;top:1926.0px;font-size:29px;line-height:44px;letter-spacing:0.76px;transform:scaleX(1.07);transform-origin:0 50%;">499533f3-6237-...</span>
<span class="t" style="left:4607.0px;top:1933.0px;font-size:29px;line-height:44px;letter-spacing:0.34px;">16 hours ago</span>
<div class="hl" style="top:2002px"></div>
<svg class="ic" viewBox="0 0 32 32" style="left:568px;top:2036px;width:32px;height:32px" fill="none" stroke="#90949c" stroke-width="1.600"><path d="M6.500 25.500L26.500 5.500M19.500 4h8.500v8.500M3.500 20.500v8.500H12"/></svg>
<span class="t" style="left:640.0px;top:2022.0px;font-size:29px;line-height:44px;letter-spacing:0.61px;transform:scaleX(1.07);transform-origin:0 50%;">fa438855-8561-...</span>
<div class="res fail" style="top:2033px"></div>
<span class="t med" style="left:986.0px;top:2033.5px;font-size:24.4px;line-height:37px;color:#000;letter-spacing:-0.44px;transform:translateX(-50%);">Fail</span>
<span class="t" style="left:1180.0px;top:2029.0px;font-size:29px;line-height:44px;letter-spacing:0.91px;">directory</span>
<span class="t" style="left:1630.0px;top:2022.0px;font-size:29px;line-height:44px;letter-spacing:0.93px;">/hostfs/var/lib/etcd</span>
<span class="t" style="left:2248.0px;top:2022.0px;font-size:29px;line-height:44px;letter-spacing:0.53px;">Ensure that the etcd data directory owner...</span>
<span class="t" style="left:2867.0px;top:2029.0px;font-size:29px;line-height:44px;letter-spacing:0.21px;">CIS Kubernetes V1.23</span>
<span class="t" style="left:3316.0px;top:2029.0px;font-size:29px;line-height:44px;letter-spacing:0.14px;">Control Plane Node...</span>
<div class="tag" style="left:3631px;top:2031px;width:167px"></div>
<span class="t med" style="left:3649.5px;top:2031.8px;font-size:25px;line-height:38px;color:#000;letter-spacing:0.31px;">Kubernetes</span>
<div class="tag" style="left:3806px;top:2031px;width:159px"></div>
<span class="t med" style="left:3824.5px;top:2031.8px;font-size:25px;line-height:38px;color:#000;letter-spacing:0.43px;">CIS 1.1.12</span>
<span class="t" style="left:4305.0px;top:2022.0px;font-size:29px;line-height:44px;letter-spacing:0.76px;transform:scaleX(1.07);transform-origin:0 50%;">499533f3-6237-...</span>
<span class="t" style="left:4607.0px;top:2029.0px;font-size:29px;line-height:44px;letter-spacing:0.34px;">16 hours ago</span>
<div class="hl" style="top:2098px"></div>
<svg class="ic" viewBox="0 0 32 32" style="left:568px;top:2132px;width:32px;height:32px" fill="none" stroke="#90949c" stroke-width="1.600"><path d="M6.500 25.500L26.500 5.500M19.500 4h8.500v8.500M3.500 20.500v8.500H12"/></svg>
<span class="t" style="left:640.0px;top:2118.0px;font-size:29px;line-height:44px;letter-spacing:0.21px;transform:scaleX(1.07);transform-origin:0 50%;">a2dc54aa-1580-...</span>
<div class="res pass" style="top:2129px"></div>
<span class="t med" style="left:986.0px;top:2129.5px;font-size:24.4px;line-height:37px;color:#000;letter-spacing:-0.54px;transform:translateX(-50%);">Pass</span>
<span class="t" style="left:1180.0px;top:2125.0px;font-size:29px;line-height:44px;letter-spacing:0.64px;">file</span>
<span class="t" style="left:1630.0px;top:2118.0px;font-size:29px;line-height:44px;letter-spacing:0.67px;">/hostfs/etc/kubernetes/controller-manage...</span>
<span class="t" style="left:2248.0px;top:2118.0px;font-size:29px;line-height:44px;letter-spacing:0.46px;">Ensure that the controller-manager.conf fil...</span>
<span class="t" style="left:2867.0px;top:2125.0px;font-size:29px;line-height:44px;letter-spacing:0.21px;">CIS Kubernetes V1.23</span>
<span class="t" style="left:3316.0px;top:2125.0px;font-size:29px;line-height:44px;letter-spacing:0.14px;">Control Plane Node...</span>
<div class="tag" style="left:3631px;top:2127px;width:167px"></div>
<span class="t med" style="left:3649.5px;top:2127.8px;font-size:25px;line-height:38px;color:#000;letter-spacing:0.31px;">Kubernetes</span>
<div class="tag" style="left:3806px;top:2127px;width:159px"></div>
<span class="t med" style="left:3824.5px;top:2127.8px;font-size:25px;line-height:38px;color:#000;letter-spacing:0.43px;">CIS 1.1.17</span>
<span class="t" style="left:4305.0px;top:2118.0px;font-size:29px;line-height:44px;letter-spacing:0.76px;transform:scaleX(1.07);transform-origin:0 50%;">499533f3-6237-...</span>
<span class="t" style="left:4607.0px;top:2125.0px;font-size:29px;line-height:44px;letter-spacing:0.34px;">16 hours ago</span>
<div class="hl" style="top:2194px"></div>
<svg class="ic" viewBox="0 0 32 32" style="left:568px;top:2228px;width:32px;height:32px" fill="none" stroke="#90949c" stroke-width="1.600"><path d="M6.500 25.500L26.500 5.500M19.500 4h8.500v8.500M3.500 20.500v8.500H12"/></svg>
<span class="t" style="left:640.0px;top:2214.0px;font-size:29px;line-height:44px;letter-spacing:0.21px;transform:scaleX(1.07);transform-origin:0 50%;">a2dc54aa-1580-...</span>
<div class="res pass" style="top:2225px"></div>
<span class="t med" style="left:986.0px;top:2225.5px;font-size:24.4px;line-height:37px;color:#000;letter-spacing:-0.54px;transform:translateX(-50%);">Pass</span>
<span class="t" style="left:1180.0px;top:2221.0px;font-size:29px;line-height:44px;letter-spacing:0.64px;">file</span>
<span class="t" style="left:1630.0px;top:2214.0px;font-size:29px;line-height:44px;letter-spacing:0.67px;">/hostfs/etc/kubernetes/controller-manage...</span>
<span class="t" style="left:2248.0px;top:2214.0px;font-size:29px;line-height:44px;letter-spacing:0.46px;">Ensure that the controller-manager.conf fil...</span>
<span class="t" style="left:2867.0px;top:2221.0px;font-size:29px;line-height:44px;letter-spacing:0.21px;">CIS Kubernetes V1.23</span>
<span class="t" style="left:3316.0px;top:2221.0px;font-size:29px;line-height:44px;letter-spacing:0.14px;">Control Plane Node...</span>
<div class="tag" style="left:3631px;top:2223px;width:167px"></div>
<span class="t med" style="left:3649.5px;top:2223.8px;font-size:25px;line-height:38px;color:#000;letter-spacing:0.31px;">Kubernetes</span>
<div class="tag" style="left:3806px;top:2223px;width:159px"></div>
<span class="t med" style="left:3824.5px;top:2223.8px;font-size:25px;line-height:38px;color:#000;letter-spacing:0.43px;">CIS 1.1.18</span>
<span class="t" style="left:4305.0px;top:2214.0px;font-size:29px;line-height:44px;letter-spacing:0.76px;transform:scaleX(1.07);transform-origin:0 50%;">499533f3-6237-...</span>
<span class="t" style="left:4607.0px;top:2221.0px;font-size:29px;line-height:44px;letter-spacing:0.34px;">16 hours ago</span>
<div class="hl" style="top:2290px"></div>
<svg class="ic" viewBox="0 0 32 32" style="left:568px;top:2324px;width:32px;height:32px" fill="none" stroke="#90949c" stroke-width="1.600"><path d="M6.500 25.500L26.500 5.500M19.500 4h8.500v8.500M3.500 20.500v8.500H12"/></svg>
<span class="t" style="left:640.0px;top:2310.0px;font-size:29px;line-height:44px;letter-spacing:0.47px;transform:scaleX(1.07);transform-origin:0 50%;">373a6dfe-f015-5...</span>
<div class="res pass" style="top:2321px"></div>
<span class="t med" style="left:986.0px;top:2321.5px;font-size:24.4px;line-height:37px;color:#000;letter-spacing:-0.54px;transform:translateX(-50%);">Pass</span>
<span class="t" style="left:1180.0px;top:2317.0px;font-size:29px;line-height:44px;letter-spacing:0.64px;">file</span>
<span class="t" style="left:1630.0px;top:2310.0px;font-size:29px;line-height:44px;letter-spacing:0.77px;">/hostfs/etc/kubernetes/manifests/kube-co...</span>
<span class="t" style="left:2248.0px;top:2310.0px;font-size:29px;line-height:44px;letter-spacing:0.34px;">Ensure that the controller manager pod sp...</span>
<span class="t" style="left:2867.0px;top:2317.0px;font-size:29px;line-height:44px;letter-spacing:0.21px;">CIS Kubernetes V1.23</span>
<span class="t" style="left:3316.0px;top:2317.0px;font-size:29px;line-height:44px;letter-spacing:0.14px;">Control Plane Node...</span>
<div class="tag" style="left:3631px;top:2319px;width:167px"></div>
<span class="t med" style="left:3649.5px;top:2319.8px;font-size:25px;line-height:38px;color:#000;letter-spacing:0.31px;">Kubernetes</span>
<div class="tag" style="left:3806px;top:2319px;width:143px"></div>
<span class="t med" style="left:3824.5px;top:2319.8px;font-size:25px;line-height:38px;color:#000;letter-spacing:0.22px;">CIS 1.1.3</span>
<span class="t" style="left:4305.0px;top:2310.0px;font-size:29px;line-height:44px;letter-spacing:0.76px;transform:scaleX(1.07);transform-origin:0 50%;">499533f3-6237-...</span>
<span class="t" style="left:4607.0px;top:2317.0px;font-size:29px;line-height:44px;letter-spacing:0.34px;">16 hours ago</span>
<div class="hl" style="top:2386px"></div>
<svg class="ic" viewBox="0 0 32 32" style="left:568px;top:2420px;width:32px;height:32px" fill="none" stroke="#90949c" stroke-width="1.600"><path d="M6.500 25.500L26.500 5.500M19.500 4h8.500v8.500M3.500 20.500v8.500H12"/></svg>
<span class="t" style="left:640.0px;top:2406.0px;font-size:29px;line-height:44px;letter-spacing:0.47px;transform:scaleX(1.07);transform-origin:0 50%;">373a6dfe-f015-5...</span>
<div class="res pass" style="top:2417px"></div>
<span class="t med" style="left:986.0px;top:2417.5px;font-size:24.4px;line-height:37px;color:#000;letter-spacing:-0.54px;transform:translateX(-50%);">Pass</span>
<span class="t" style="left:1180.0px;top:2413.0px;font-size:29px;line-height:44px;letter-spacing:0.64px;">file</span>
<span class="t" style="left:1630.0px;top:2406.0px;font-size:29px;line-height:44px;letter-spacing:0.77px;">/hostfs/etc/kubernetes/manifests/kube-co...</span>
<span class="t" style="left:2248.0px;top:2406.0px;font-size:29px;line-height:44px;letter-spacing:0.34px;">Ensure that the controller manager pod sp...</span>
<span class="t" style="left:2867.0px;top:2413.0px;font-size:29px;line-height:44px;letter-spacing:0.21px;">CIS Kubernetes V1.23</span>
<span class="t" style="left:3316.0px;top:2413.0px;font-size:29px;line-height:44px;letter-spacing:0.14px;">Control Plane Node...</span>
<div class="tag" style="left:3631px;top:2415px;width:167px"></div>
<span class="t med" style="left:3649.5px;top:2415.8px;font-size:25px;line-height:38px;color:#000;letter-spacing:0.31px;">Kubernetes</span>
<div class="tag" style="left:3806px;top:2415px;width:143px"></div>
<span class="t med" style="left:3824.5px;top:2415.8px;font-size:25px;line-height:38px;color:#000;letter-spacing:0.22px;">CIS 1.1.4</span>
<span class="t" style="left:4305.0px;top:2406.0px;font-size:29px;line-height:44px;letter-spacing:0.76px;transform:scaleX(1.07);transform-origin:0 50%;">499533f3-6237-...</span>
<span class="t" style="left:4607.0px;top:2413.0px;font-size:29px;line-height:44px;letter-spacing:0.34px;">16 hours ago</span>
<div class="hl" style="top:2482px"></div>
<svg class="ic" viewBox="0 0 32 32" style="left:568px;top:2516px;width:32px;height:32px" fill="none" stroke="#90949c" stroke-width="1.600"><path d="M6.500 25.500L26.500 5.500M19.500 4h8.500v8.500M3.500 20.500v8.500H12"/></svg>
<span class="t" style="left:640.0px;top:2502.0px;font-size:29px;line-height:44px;letter-spacing:0.67px;transform:scaleX(1.07);transform-origin:0 50%;">266fb1b5-3579-...</span>
<div class="res fail" style="top:2513px"></div>
<span class="t med" style="left:986.0px;top:2513.5px;font-size:24.4px;line-height:37px;color:#000;letter-spacing:-0.44px;transform:translateX(-50%);">Fail</span>
<span class="t" style="left:1180.0px;top:2509.0px;font-size:29px;line-height:44px;letter-spacing:0.51px;">process</span>
<span class="t" style="left:1630.0px;top:2502.0px;font-size:29px;line-height:44px;letter-spacing:0.65px;">kube-apiserver</span>
<span class="t" style="left:2248.0px;top:2502.0px;font-size:29px;line-height:44px;letter-spacing:0.26px;">Ensure that the admission control plugin S...</span>
<span class="t" style="left:2867.0px;top:2509.0px;font-size:29px;line-height:44px;letter-spacing:0.21px;">CIS Kubernetes V1.23</span>
<span class="t" style="left:3316.0px;top:2509.0px;font-size:29px;line-height:44px;letter-spacing:-0.25px;">API Server</span>
<div class="tag" style="left:3631px;top:2511px;width:167px"></div>
<span class="t med" style="left:3649.5px;top:2511.8px;font-size:25px;line-height:38px;color:#000;letter-spacing:0.31px;">Kubernetes</span>
<div class="tag" style="left:3806px;top:2511px;width:159px"></div>
<span class="t med" style="left:3824.5px;top:2511.8px;font-size:25px;line-height:38px;color:#000;letter-spacing:0.43px;">CIS 1.2.14</span>
<span class="t" style="left:4305.0px;top:2502.0px;font-size:29px;line-height:44px;letter-spacing:0.76px;transform:scaleX(1.07);transform-origin:0 50%;">499533f3-6237-...</span>
<span class="t" style="left:4607.0px;top:2509.0px;font-size:29px;line-height:44px;letter-spacing:0.34px;">16 hours ago</span>
<div class="hl" style="top:2578px"></div>
<div id="frame"></div>
</body></html>
